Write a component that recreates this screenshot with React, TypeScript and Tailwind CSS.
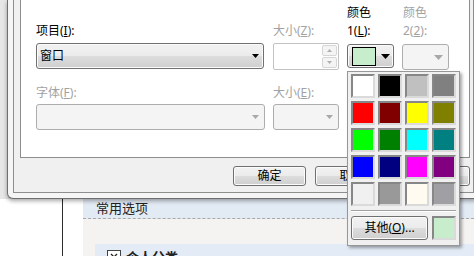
import React from 'react'

const swatches = [
  'bg-[#ffffff]', 'bg-[#000000]', 'bg-[#c0c0c0]', 'bg-[#808080]',
  'bg-[#ff0000]', 'bg-[#800000]', 'bg-[#ffff00]', 'bg-[#808000]',
  'bg-[#00ff00]', 'bg-[#008000]', 'bg-[#00ffff]', 'bg-[#008080]',
  'bg-[#0000ff]', 'bg-[#000080]', 'bg-[#ff00ff]', 'bg-[#800080]',
  'bg-[#f0f0f0]', 'bg-[#999999]', 'bg-[#fffbf0]', 'bg-[#a0a0a4]',
]

function Arrow({ color = '#000', w = 9, h = 5 }: { color?: string; w?: number; h?: number }) {
  return (
    <svg width={w} height={h} viewBox={`0 0 ${w} ${h}`} className="block">
      <polygon points={`0,0 ${w},0 ${w / 2},${h}`} fill={color} />
    </svg>
  )
}

const win7Btn =
  'border border-[#707070] rounded-[3px] bg-[linear-gradient(#f2f2f2,#ebebeb_50%,#dddddd_50%,#cfcfcf)] shadow-[inset_0_0_0_1px_#fbfbfb]'
const sunken = 'border-2 border-t-[#878787] border-l-[#878787] border-r-[#dadada] border-b-[#dadada]'

function Key({ k }: { k: string }) {
  return <span className="underline underline-offset-1">{k}</span>
}

export default function App() {
  return (
    <div className="relative w-[474px] h-[256px] overflow-hidden bg-white text-[12px] text-black font-[family-name:'Noto_Sans','Noto_Sans_CJK_SC',sans-serif]">
      {/* dialog */}
      <div className="flex h-[199px] bg-[linear-gradient(to_right,#e6e6e6,#f8f8f8)]">
        <div className="w-[7px] shrink-0" />
        <div className="relative z-10 flex-1 flex border border-t-0 border-[#6e6e6e] rounded-bl-[6px] bg-[#f5f5f5] pl-[5px] pr-[2px] pb-[5px] shadow-[0_2px_4px_rgba(0,0,0,0.35)]">
          <div className="flex-1 flex flex-col border border-t-0 border-[#8e8e8e] bg-[#f0f0f0] pl-[6px] pr-[3px]">
            <div className="h-[158px] border border-t-0 border-[#8d8d8d] bg-white pl-[15px]">
              {/* row 1 labels */}
              <div className="flex gap-[8px] pt-[4px] h-[40px] items-end leading-[18px]">
                <div className="w-[229px]">项目(<Key k="I" />):</div>
                <div className="w-[66px] text-[#a2a2a2]">大小(<Key k="Z" />):</div>
                <div className="w-[48px]">
                  <div>颜色</div>
                  <div>1(<Key k="L" />):</div>
                </div>
                <div className="w-[46px] text-[#a2a2a2]">
                  <div>颜色</div>
                  <div>2(<Key k="2" />):</div>
                </div>
              </div>
              {/* row 1 controls */}
              <div className="flex gap-[8px] mt-[3px] items-start">
                <div className="w-[229px]">
                  <div className={`w-[228px] h-[26px] flex items-center justify-between pl-[3px] pr-[4px] ${win7Btn}`}>
                    <span>窗口</span>
                    <Arrow w={7} h={4} />
                  </div>
                </div>
                <div className="w-[66px] h-[27px] border border-[#c3c3c3] rounded-[2px] bg-white flex justify-end p-[1px]">
                  <div className="w-[15px] flex flex-col gap-[1px]">
                    <div className="flex-1 border border-[#d6d6d6] rounded-[2px] bg-[#f4f4f4] flex items-center justify-center">
                      <svg width="5" height="3" viewBox="0 0 5 3"><polygon points="0,3 5,3 2.5,0" fill="#b0b0b0" /></svg>
                    </div>
                    <div className="flex-1 border border-[#d6d6d6] rounded-[2px] bg-[#f4f4f4] flex items-center justify-center">
                      <Arrow color="#b0b0b0" w={5} h={3} />
                    </div>
                  </div>
                </div>
                <div className={`mt-[1px] w-[47px] h-[24px] flex items-start pl-[4px] pt-[2px] gap-[5px] ${win7Btn}`}>
                  <div className="w-[24px] h-[19px] border border-black bg-[#c7edcc]" />
                  <div className="mt-[7px]">
                    <Arrow w={9} h={5} />
                  </div>
                </div>
                <div className="mt-[1px] w-[47px] h-[26px] border border-[#adadad] rounded-[3px] bg-[#f4f4f4] flex items-center justify-end pr-[5px]">
                  <Arrow color="#a8a8a8" w={9} h={5} />
                </div>
              </div>
              {/* row 2 labels */}
              <div className="flex gap-[8px] mt-[14px] leading-[18px] text-[#a2a2a2]">
                <div className="w-[229px]">字体(<Key k="F" />):</div>
                <div className="w-[66px]">大小(<Key k="E" />):</div>
              </div>
              {/* row 2 controls */}
              <div className="flex gap-[8px] mt-[2px]">
                <div className="w-[229px] h-[26px] border border-[#adadad] rounded-[3px] bg-[#f4f4f4] flex items-center justify-end pr-[5px]">
                  <Arrow color="#a8a8a8" w={7} h={4} />
                </div>
                <div className="w-[66px] h-[26px] border border-[#adadad] rounded-[3px] bg-[#f4f4f4] flex items-center justify-end pr-[5px]">
                  <Arrow color="#a8a8a8" w={7} h={4} />
                </div>
              </div>
            </div>
            {/* buttons */}
            <div className="flex gap-[9px] pl-[213px] pt-[8px]">
              <div className={`w-[73px] h-[20px] flex items-center justify-center ${win7Btn}`}>确定</div>
              <div className={`w-[73px] h-[20px] flex items-center justify-center ${win7Btn}`}>取消</div>
              <div className={`w-[73px] h-[20px] flex items-center justify-center ${win7Btn}`}>应用</div>
            </div>
          </div>
        </div>
      </div>

      {/* page below the dialog */}
      <div className="flex h-[57px]">
        <div className="w-[62px] bg-white" />
        <div className="w-px bg-[#2b2b2b]" />
        <div className="w-[20px] bg-white" />
        <div className="flex-1 flex flex-col bg-[#f4f3f1]">
          <div className="h-[20px] bg-[#e2eaf4] border-b border-dashed border-[#a9a9a9] pl-[13px] text-[13px] leading-[19px] text-[#222]">
            常用选项
          </div>
          <div className="pt-[25px] pl-[12px]">
            <div className="h-[30px] bg-[#e3ebf6] pl-[12px] pt-[6px] flex items-start gap-[5px]">
              <div className="w-[14px] h-[14px] border border-[#444] bg-white flex items-center justify-center">
                <svg width="8" height="8" viewBox="0 0 8 8">
                  <path d="M1 1L7 7M7 1L1 7" stroke="#222" strokeWidth="1.3" />
                </svg>
              </div>
              <span className="text-[13px] leading-[14px] font-bold text-[#222]">个人分类</span>
            </div>
          </div>
        </div>
      </div>

      {/* colour picker drop-down */}
      <div className="absolute left-[347px] top-[71px] w-[113px] border border-[#979797] bg-[#f0f0f0] pl-[3px] pr-[3px] pt-[2px] pb-[5px] shadow-[2px_2px_3px_rgba(0,0,0,0.35)] z-20">
        <div className="grid grid-cols-[repeat(4,24px)] gap-[3px]">
          {swatches.map((c, i) => (
            <div key={i} className={`h-[24px] ${sunken} ${c}`} />
          ))}
        </div>
        <div className="mt-[4px] border-t border-b border-t-[#a0a0a0] border-b-white" />
        <div className="mt-[4px] flex gap-[4px]">
          <div className={`w-[77px] h-[24px] flex items-center justify-center ${win7Btn}`}>
            其他(<Key k="O" />)...
          </div>
          <div className={`w-[24px] h-[24px] ${sunken} bg-[#c7edcc]`} />
        </div>
      </div>
    </div>
  )
}
